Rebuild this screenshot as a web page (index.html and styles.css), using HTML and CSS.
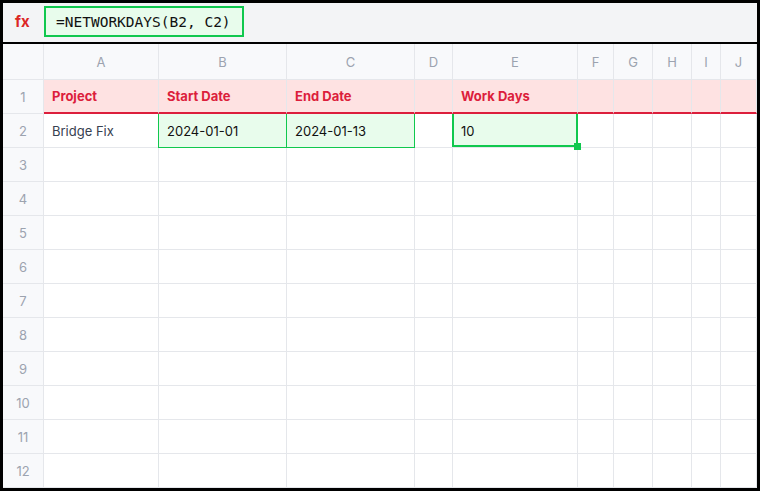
FILE: index.html
```html
<!DOCTYPE html>
<html>
<head>
<meta charset="utf-8">
<link rel="stylesheet" href="styles.css">
</head>
<body>
<div class="frame">
  <div class="fbar">
    <span class="fx">fx</span>
    <div class="finput">=NETWORKDAYS(B2, C2)</div>
  </div>
  <div class="grid">
    <div class="ch corner"></div>
    <div class="ch">A</div><div class="ch">B</div><div class="ch">C</div><div class="ch">D</div><div class="ch">E</div><div class="ch">F</div><div class="ch">G</div><div class="ch">H</div><div class="ch">I</div><div class="ch">J</div>

    <div class="rh">1</div>
    <div class="c hd">Project</div><div class="c hd">Start Date</div><div class="c hd">End Date</div><div class="c hd"></div><div class="c hd">Work Days</div><div class="c hd"></div><div class="c hd"></div><div class="c hd"></div><div class="c hd"></div><div class="c hd"></div>

    <div class="rh">2</div>
    <div class="c txt">Bridge Fix</div><div class="c ref">2024-01-01</div><div class="c ref">2024-01-13</div><div class="c"></div><div class="c sel">10</div><div class="c"></div><div class="c"></div><div class="c"></div><div class="c"></div><div class="c"></div>

    <div class="rh">3</div><div class="c"></div><div class="c"></div><div class="c"></div><div class="c"></div><div class="c"></div><div class="c"></div><div class="c"></div><div class="c"></div><div class="c"></div><div class="c"></div>
    <div class="rh">4</div><div class="c"></div><div class="c"></div><div class="c"></div><div class="c"></div><div class="c"></div><div class="c"></div><div class="c"></div><div class="c"></div><div class="c"></div><div class="c"></div>
    <div class="rh">5</div><div class="c"></div><div class="c"></div><div class="c"></div><div class="c"></div><div class="c"></div><div class="c"></div><div class="c"></div><div class="c"></div><div class="c"></div><div class="c"></div>
    <div class="rh">6</div><div class="c"></div><div class="c"></div><div class="c"></div><div class="c"></div><div class="c"></div><div class="c"></div><div class="c"></div><div class="c"></div><div class="c"></div><div class="c"></div>
    <div class="rh">7</div><div class="c"></div><div class="c"></div><div class="c"></div><div class="c"></div><div class="c"></div><div class="c"></div><div class="c"></div><div class="c"></div><div class="c"></div><div class="c"></div>
    <div class="rh">8</div><div class="c"></div><div class="c"></div><div class="c"></div><div class="c"></div><div class="c"></div><div class="c"></div><div class="c"></div><div class="c"></div><div class="c"></div><div class="c"></div>
    <div class="rh">9</div><div class="c"></div><div class="c"></div><div class="c"></div><div class="c"></div><div class="c"></div><div class="c"></div><div class="c"></div><div class="c"></div><div class="c"></div><div class="c"></div>
    <div class="rh">10</div><div class="c"></div><div class="c"></div><div class="c"></div><div class="c"></div><div class="c"></div><div class="c"></div><div class="c"></div><div class="c"></div><div class="c"></div><div class="c"></div>
    <div class="rh">11</div><div class="c"></div><div class="c"></div><div class="c"></div><div class="c"></div><div class="c"></div><div class="c"></div><div class="c"></div><div class="c"></div><div class="c"></div><div class="c"></div>
    <div class="rh">12</div><div class="c"></div><div class="c"></div><div class="c"></div><div class="c"></div><div class="c"></div><div class="c"></div><div class="c"></div><div class="c"></div><div class="c"></div><div class="c"></div>
  </div>
</div>
</body>
</html>
```

FILE: styles.css
```css
* { box-sizing: border-box; }
html, body { margin: 0; padding: 0; background: #fff; }
body { font-family: Inter, "Noto Sans", sans-serif; }

.frame {
  width: 760px;
  height: 491px;
  border: 3px solid #000;
  overflow: hidden;
  background: #fff;
  display: flex;
  flex-direction: column;
}

.fbar {
  height: 41px;
  flex: none;
  background: #f3f4f6;
  border-bottom: 2px solid #000;
  display: flex;
  align-items: center;
  padding: 0 0 2px 12px;
}

.fx {
  width: 29px;
  color: #dc2626;
  font-weight: 700;
  font-size: 15px;
  line-height: 1;
}

.finput {
  width: 200px;
  height: 31px;
  border: 2px solid #10c84e;
  background: #e8fcec;
  font-family: "DejaVu Sans Mono", monospace;
  font-size: 14.5px;
  color: #111;
  padding-left: 10px;
  display: flex;
  align-items: center;
}

.grid {
  display: grid;
  grid-template-columns: 41px 115px 128px 128px 38px 125px 36px 39px 39px 29px 36px;
  grid-template-rows: 36px repeat(12, 34px);
}

.grid > div {
  border-right: 1px solid #e5e7eb;
  border-bottom: 1px solid #e5e7eb;
  font-size: 13px;
  display: flex;
  align-items: center;
}

.ch {
  background: #f8f9fb;
  color: #9ca3af;
  justify-content: center;
}

.rh {
  background: #f8f9fb;
  color: #9ca3af;
  justify-content: center;
}

.c {
  padding-left: 8px;
  color: #111;
  position: relative;
}

.hd {
  background: #fee2e2;
  color: #dc1e3c;
  font-weight: 700;
  border-bottom: 2px solid #dc1e3c !important;
}

.txt { color: #374151; }

.ref { background: #e8fcec; }
.ref::after {
  content: "";
  position: absolute;
  top: 0;
  left: -1px;
  right: -1px;
  bottom: -1px;
  border: 1px solid #10c84e;
  border-top: none;
}

.sel { background: #e8fcec; }
.sel::after {
  content: "";
  position: absolute;
  top: 0;
  left: -1px;
  right: -1px;
  bottom: 0;
  border: 2px solid #10c84e;
  border-top: none;
}
.sel::before {
  content: "";
  position: absolute;
  right: -4px;
  bottom: -3px;
  width: 7px;
  height: 7px;
  background: #10c84e;
  z-index: 2;
}
```
